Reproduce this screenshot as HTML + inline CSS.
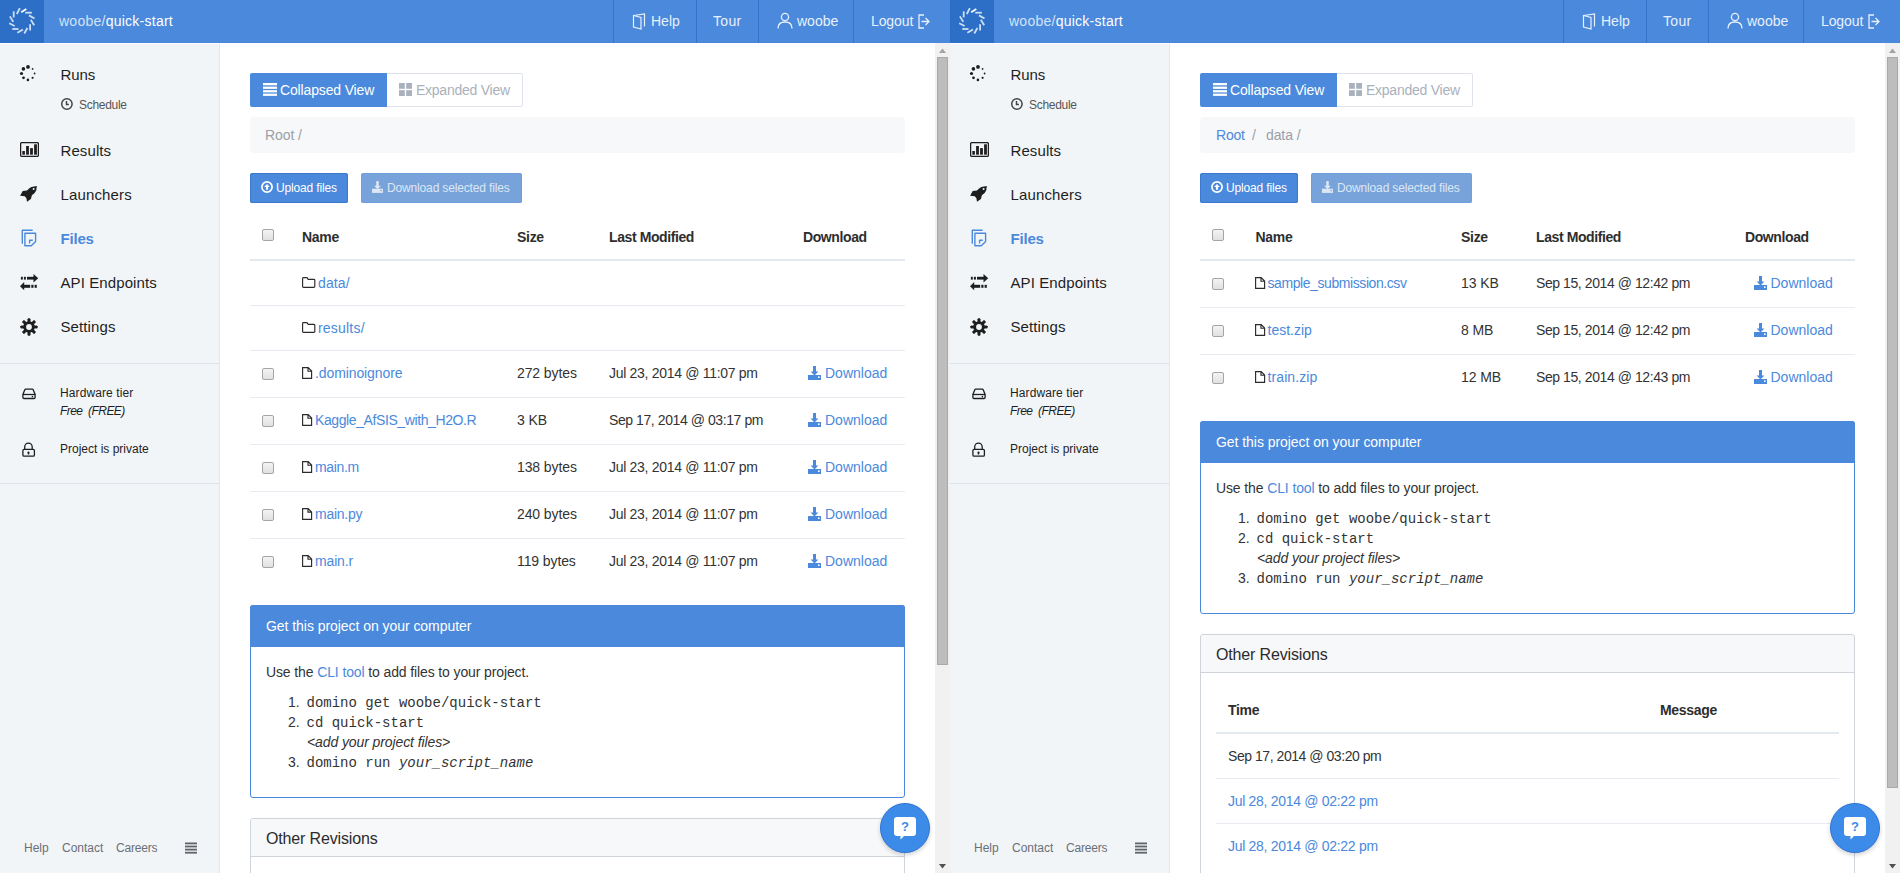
<!DOCTYPE html>
<html><head><meta charset="utf-8"><title>Files</title>
<style>
html,body{margin:0;padding:0;background:#fff;width:1900px;height:877px;overflow:hidden;}
body{font-family:"Liberation Sans", sans-serif;position:relative;}
.panel{position:absolute;top:0;width:950px;height:873px;overflow:hidden;background:#fff;}
.t{position:absolute;white-space:nowrap;}
.r{position:absolute;box-sizing:content-box;}
.cb{width:10px;height:10px;border:1px solid #a5a5a5;border-radius:2px;background:linear-gradient(#f3f3f3,#e1e1e1);}
</style></head><body>
<div class="panel" style="left:0px"><div class="r" style="left:0px;top:0px;width:950px;height:43px;background:#4a89dc;"></div><div class="r" style="left:0px;top:43px;width:950px;height:1px;background:#fdfdfd;"></div><div class="r" style="left:0px;top:0px;width:44px;height:43px;background:#2d6fc6;"></div><svg class="r" style="left:0px;top:0px" width="44" height="42" viewBox="0 0 44 42"><g stroke-width="1.8" stroke-linecap="butt"><line x1="19.8" y1="8.2" x2="16.8" y2="14" stroke="#cddff5"/><line x1="26.3" y1="8.9" x2="21.2" y2="12.3" stroke="#ffffff"/><line x1="25.3" y1="12.7" x2="31.8" y2="12.7" stroke="#cddff5"/><line x1="29" y1="15.4" x2="34.5" y2="18.5" stroke="#cddff5"/><line x1="30.8" y1="19.8" x2="34.2" y2="25.3" stroke="#cddff5"/><line x1="30.1" y1="24.3" x2="30.1" y2="30.4" stroke="#cddff5"/><line x1="27.4" y1="28" x2="24.3" y2="33.5" stroke="#cddff5"/><line x1="22.9" y1="29.4" x2="17.4" y2="32.8" stroke="#cddff5"/><line x1="18.5" y1="29" x2="12.3" y2="29" stroke="#cddff5"/><line x1="14.7" y1="26" x2="9.2" y2="23.3" stroke="#cddff5"/><line x1="13.3" y1="21.9" x2="9.9" y2="16.4" stroke="#cddff5"/><line x1="13.7" y1="11.3" x2="13.7" y2="17.4" stroke="#cddff5"/></g></svg><div class="t" style="left:59px;top:13.85px;font-size:14px;line-height:14px;color:#2b2b2b;letter-spacing:0.25px;"><span style="color:#d3e2f6">woobe/</span><span style="color:#fff">quick-start</span></div><div class="r" style="left:613px;top:0px;width:1px;height:43px;background:#3473c9;"></div><div class="r" style="left:696px;top:0px;width:1px;height:43px;background:#3473c9;"></div><div class="r" style="left:758px;top:0px;width:1px;height:43px;background:#3473c9;"></div><div class="r" style="left:853px;top:0px;width:1px;height:43px;background:#3473c9;"></div><svg class="r" style="left:632px;top:13px" width="14" height="17" viewBox="0 0 14 17"><g fill="none" stroke="#e8f0fb" stroke-width="1.2"><path d="M1.5 2.5 L12.5 1 L12.5 13.5"/><path d="M1.5 2.5 L9 4.5 L9 16 L1.5 14 Z"/></g></svg><div class="t" style="left:651px;top:14.15px;font-size:14px;line-height:14px;color:#e8f0fb;">Help</div><div class="t" style="left:713px;top:14.15px;font-size:14px;line-height:14px;color:#e8f0fb;letter-spacing:0.3px;">Tour</div><svg class="r" style="left:777px;top:12px" width="16" height="17" viewBox="0 0 16 17"><g fill="none" stroke="#e8f0fb" stroke-width="1.3"><circle cx="8" cy="5" r="3.6"/><path d="M1 16.5 C1 11.5 4 10 8 10 C12 10 15 11.5 15 16.5"/></g></svg><div class="t" style="left:797px;top:14.15px;font-size:14px;line-height:14px;color:#e8f0fb;">woobe</div><div class="t" style="left:871px;top:14.15px;font-size:14px;line-height:14px;color:#e8f0fb;letter-spacing:-0.1px;">Logout</div><svg class="r" style="left:918px;top:14px" width="12" height="15" viewBox="0 0 12 15"><g fill="none" stroke="#e8f0fb" stroke-width="1.3"><path d="M6 1 L1 1 L1 14 L6 14"/><path d="M3.5 7.5 L11 7.5 M7.5 4 L11 7.5 L7.5 11"/></g></svg><div class="r" style="left:0px;top:44px;width:219px;height:829px;background:#f2f5f8;"></div><div class="r" style="left:219px;top:44px;width:1px;height:829px;background:#e3e7ec;"></div><svg class="r" style="left:16px;top:61px" width="24" height="24" viewBox="0 0 24 24"><g fill="#1e1e1e"><circle cx="12.00" cy="5.90" r="1.9"/><circle cx="7.40" cy="7.90" r="1.8"/><circle cx="5.50" cy="12.50" r="1.6"/><circle cx="7.50" cy="16.80" r="1.4"/><circle cx="11.90" cy="18.90" r="1.3"/><circle cx="16.60" cy="16.80" r="1.1"/><circle cx="18.60" cy="12.50" r="0.9"/><circle cx="16.60" cy="7.90" r="0.9"/></g></svg><div class="t" style="left:60.5px;top:67.30px;font-size:15px;line-height:15px;color:#1e1e1e;letter-spacing:-0.1px;">Runs</div><svg class="r" style="left:60px;top:97px" width="14" height="14" viewBox="0 0 14 14"><g fill="none" stroke="#444" stroke-width="1.5"><circle cx="6.9" cy="7" r="5.2"/><path d="M6.5 4 V7.6 H8.9"/></g></svg><div class="t" style="left:79px;top:98.84px;font-size:12px;line-height:12px;color:#555;letter-spacing:-0.3px;">Schedule</div><svg class="r" style="left:20px;top:142px" width="19" height="15" viewBox="0 0 19 15"><rect x="0.6" y="0.6" width="17.8" height="13.8" rx="1.2" fill="none" stroke="#1e1e1e" stroke-width="1.3"/><g fill="#1e1e1e"><rect x="2.3" y="9" width="2.6" height="3.7"/><rect x="6.1" y="4" width="2.8" height="8.7"/><rect x="10.1" y="6.1" width="2.8" height="6.6"/><rect x="14.1" y="2.3" width="2.8" height="10.4"/></g></svg><div class="t" style="left:60.5px;top:143.30px;font-size:15px;line-height:15px;color:#1e1e1e;letter-spacing:0.1px;">Results</div><svg class="r" style="left:16px;top:182px" width="24" height="24" viewBox="0 0 24 24"><path fill="#1e1e1e" d="M4.1 13.7 L6.7 9 L11 8.5 Q13 6 15.3 4.9 L20.8 4.1 L20.3 8.2 Q19 11.5 15.9 13.2 L14.9 17 L11 19.7 L10.4 16.2 L8.8 14.2 Z"/><circle cx="17.6" cy="6.9" r="1" fill="#f2f5f8"/></svg><div class="t" style="left:60.5px;top:187.30px;font-size:15px;line-height:15px;color:#1e1e1e;letter-spacing:0.15px;">Launchers</div><svg class="r" style="left:16px;top:226px" width="24" height="24" viewBox="0 0 24 24"><g fill="none" stroke="#4a89dc" stroke-width="1.4" stroke-linejoin="round"><path d="M6.3 17.8 V4.3 H16.7"/><path d="M8.9 7.3 H19.6 V15.5 L15.3 19.7 H8.9 Z"/><path d="M13.6 17.6 V14.2 H16.8"/></g></svg><div class="t" style="left:60.5px;top:231.30px;font-size:15px;line-height:15px;color:#4a89dc;font-weight:700;letter-spacing:-0.2px;">Files</div><svg class="r" style="left:16px;top:270px" width="24" height="24" viewBox="0 0 24 24"><g fill="#1e1e1e"><rect x="11" y="6.8" width="7.5" height="2.8"/><path d="M17.5 4.1 L22.2 8.2 L17.5 12.6 Z"/><rect x="4.9" y="6.8" width="1.9" height="2.8"/><rect x="7.9" y="6.8" width="2" height="2.8"/><rect x="8" y="14.8" width="6.2" height="3"/><path d="M8.2 12 L4 16.3 L8.2 20.3 Z"/><rect x="15.3" y="14.8" width="2.2" height="3"/><rect x="18.6" y="14.8" width="2.2" height="3"/></g></svg><div class="t" style="left:60.5px;top:275.30px;font-size:15px;line-height:15px;color:#1e1e1e;letter-spacing:0.1px;">API Endpoints</div><svg class="r" style="left:20px;top:318px" width="18" height="18" viewBox="0 0 18 18"><g fill="#1e1e1e"><rect x="7.7" y="0.6" width="2.6" height="16.8" rx="0.6" transform="rotate(0 9 9)"/><rect x="7.7" y="0.6" width="2.6" height="16.8" rx="0.6" transform="rotate(45 9 9)"/><rect x="7.7" y="0.6" width="2.6" height="16.8" rx="0.6" transform="rotate(90 9 9)"/><rect x="7.7" y="0.6" width="2.6" height="16.8" rx="0.6" transform="rotate(135 9 9)"/><rect x="7.7" y="0.6" width="2.6" height="16.8" rx="0.6" transform="rotate(180 9 9)"/><rect x="7.7" y="0.6" width="2.6" height="16.8" rx="0.6" transform="rotate(225 9 9)"/><rect x="7.7" y="0.6" width="2.6" height="16.8" rx="0.6" transform="rotate(270 9 9)"/><rect x="7.7" y="0.6" width="2.6" height="16.8" rx="0.6" transform="rotate(315 9 9)"/><circle cx="9" cy="9" r="5.8"/></g><circle cx="9" cy="9" r="2.9" fill="#f2f5f8"/></svg><div class="t" style="left:60.5px;top:319.30px;font-size:15px;line-height:15px;color:#1e1e1e;letter-spacing:0.1px;">Settings</div><div class="r" style="left:0px;top:363px;width:219px;height:1px;background:#dde2e8;"></div><svg class="r" style="left:16px;top:382px" width="24" height="24" viewBox="0 0 24 24"><g fill="none" stroke="#1e1e1e" stroke-width="1.3"><path d="M9.8 7.2 H16.2 Q17 7.2 17.3 8 L19.1 12.5 V15.5 Q19.1 16.5 18.1 16.5 H7.9 Q6.9 16.5 6.9 15.5 V12.5 L8.7 8 Q9 7.2 9.8 7.2 Z"/><path d="M6.9 12.5 H19.1"/></g><circle cx="16.4" cy="14.6" r="0.8" fill="#1e1e1e"/></svg><div class="t" style="left:60px;top:386.84px;font-size:12px;line-height:12px;color:#1e1e1e;letter-spacing:0.1px;">Hardware tier</div><div class="t" style="left:60px;top:404.84px;font-size:12px;line-height:12px;color:#1e1e1e;font-style:italic;letter-spacing:-0.55px;">Free&nbsp;&nbsp;(FREE)</div><svg class="r" style="left:16px;top:436px" width="24" height="24" viewBox="0 0 24 24"><g fill="none" stroke="#1e1e1e" stroke-width="1.3"><path d="M8.7 13.4 V10.95 A3.75 3.75 0 0 1 16.2 10.95 V13.4"/><rect x="6.9" y="13.4" width="11.5" height="6.7" rx="1.2"/></g><path d="M12.5 15.4 a1.1 1.1 0 0 1 1.1 1.1 l-0.5 1.9 h-1.2 l-0.5 -1.9 a1.1 1.1 0 0 1 1.1 -1.1z" fill="#1e1e1e"/></svg><div class="t" style="left:60px;top:442.84px;font-size:12px;line-height:12px;color:#1e1e1e;">Project is private</div><div class="r" style="left:0px;top:483px;width:219px;height:1px;background:#dde2e8;"></div><div class="t" style="left:24px;top:841.84px;font-size:12px;line-height:12px;color:#6b6f76;">Help</div><div class="t" style="left:62px;top:841.84px;font-size:12px;line-height:12px;color:#6b6f76;">Contact</div><div class="t" style="left:116px;top:841.84px;font-size:12px;line-height:12px;color:#6b6f76;letter-spacing:-0.2px;">Careers</div><svg class="r" style="left:185px;top:842px" width="12" height="12" viewBox="0 0 12 12"><g fill="#5f636a"><rect x="0" y="0.5" width="12" height="1.8"/><rect x="0" y="3.6" width="12" height="1.8"/><rect x="0" y="6.7" width="12" height="1.8"/><rect x="0" y="9.8" width="12" height="1.8"/></g></svg><div class="r" style="left:250px;top:73px;width:137px;height:34px;background:#4a89dc;border-radius:2px 0 0 2px;"></div><div class="r" style="left:387px;top:73px;width:135px;height:32px;border:1px solid #dfe4ec;border-left:none;border-radius:0 2px 2px 0;"></div><svg class="r" style="left:263px;top:83px" width="14" height="13" viewBox="0 0 14 13"><g fill="#fff"><rect x="0" y="0" width="14" height="2.3"/><rect x="0" y="3.6" width="14" height="2.3"/><rect x="0" y="7.1" width="14" height="2.3"/><rect x="0" y="10.6" width="14" height="2.3"/></g></svg><div class="t" style="left:280px;top:83.15px;font-size:14px;line-height:14px;color:#fff;letter-spacing:-0.15px;">Collapsed View</div><svg class="r" style="left:399px;top:83px" width="13" height="13" viewBox="0 0 13 13"><g fill="#a9b1bc"><rect x="0" y="0" width="5.8" height="5.8"/><rect x="7.2" y="0" width="5.8" height="5.8"/><rect x="0" y="7.2" width="5.8" height="5.8"/><rect x="7.2" y="7.2" width="5.8" height="5.8"/></g></svg><div class="t" style="left:416px;top:83.15px;font-size:14px;line-height:14px;color:#a9b1bc;letter-spacing:-0.25px;">Expanded View</div><div class="r" style="left:250px;top:117px;width:655px;height:36px;background:#f7f8fa;border-radius:4px;"></div><div class="t" style="left:265px;top:128.15px;font-size:14px;line-height:14px;color:#9aa0a8;letter-spacing:-0.1px;">Root /</div><div class="r" style="left:250px;top:173px;width:98px;height:30px;background:#4a89dc;border-radius:2.5px;box-shadow:inset 0 0 0 1px #3b79cf;"></div><svg class="r" style="left:261px;top:181px" width="12" height="12" viewBox="0 0 12 12"><circle cx="6" cy="6" r="5.1" fill="none" stroke="#fff" stroke-width="1.7"/><path d="M6 3 L8.8 5.9 H7.1 V8.8 H4.9 V5.9 H3.2 Z" fill="#fff"/></svg><div class="t" style="left:276px;top:182.34px;font-size:12px;line-height:12px;color:#fff;letter-spacing:-0.15px;">Upload files</div><div class="r" style="left:361px;top:173px;width:161px;height:30px;background:#78a3da;border-radius:2.5px;box-shadow:inset 0 0 0 1px #70a0db;"></div><svg class="r" style="left:372px;top:181px" width="11" height="12" viewBox="0 0 13 14"><g fill="#dce7f5"><rect x="5" y="0" width="3" height="6"/><path d="M2.6 5.6 H10.4 L6.5 9.6 Z"/><rect x="0" y="9" width="13" height="5"/></g><rect x="10" y="10.4" width="1.6" height="1.6" fill="#78a3da"/></svg><div class="t" style="left:387px;top:182.34px;font-size:12px;line-height:12px;color:#dce7f5;letter-spacing:-0.15px;">Download selected files</div><div class="r cb" style="left:262px;top:229px"></div><div class="t" style="left:302px;top:230.15px;font-size:14px;line-height:14px;color:#2e2e2e;font-weight:700;letter-spacing:-0.3px;">Name</div><div class="t" style="left:517px;top:230.15px;font-size:14px;line-height:14px;color:#2e2e2e;font-weight:700;letter-spacing:-0.3px;">Size</div><div class="t" style="left:609px;top:230.15px;font-size:14px;line-height:14px;color:#2e2e2e;font-weight:700;letter-spacing:-0.4px;">Last Modified</div><div class="t" style="left:803px;top:230.15px;font-size:14px;line-height:14px;color:#2e2e2e;font-weight:700;letter-spacing:-0.4px;">Download</div><div class="r" style="left:250px;top:259px;width:655px;height:2px;background:#e4e9f0;"></div><svg class="r" style="left:302px;top:277px" width="14" height="12" viewBox="0 0 14 12"><path d="M0.6 1.5 Q0.6 0.6 1.5 0.6 H5 L6.2 2.3 H11.9 Q12.8 2.3 12.8 3.2 V9.4 Q12.8 10.3 11.9 10.3 H1.5 Q0.6 10.3 0.6 9.4 Z" fill="none" stroke="#2b2b2b" stroke-width="1.15"/></svg><div class="t" style="left:318px;top:276.15px;font-size:14px;line-height:14px;color:#4a89dc;letter-spacing:0.1px;">data/</div><div class="r" style="left:250px;top:305px;width:655px;height:1px;background:#e8ecf2;"></div><svg class="r" style="left:302px;top:322px" width="14" height="12" viewBox="0 0 14 12"><path d="M0.6 1.5 Q0.6 0.6 1.5 0.6 H5 L6.2 2.3 H11.9 Q12.8 2.3 12.8 3.2 V9.4 Q12.8 10.3 11.9 10.3 H1.5 Q0.6 10.3 0.6 9.4 Z" fill="none" stroke="#2b2b2b" stroke-width="1.15"/></svg><div class="t" style="left:318px;top:321.15px;font-size:14px;line-height:14px;color:#4a89dc;letter-spacing:0.2px;">results/</div><div class="r" style="left:250px;top:350px;width:655px;height:1px;background:#e8ecf2;"></div><div class="r cb" style="left:262px;top:368px"></div><svg class="r" style="left:302px;top:367px" width="12" height="14" viewBox="0 0 12 14"><path d="M0.6 0.6 H6.2 L9.6 4 V11.4 H0.6 Z M6 0.6 V4.2 H9.6" fill="none" stroke="#2b2b2b" stroke-width="1.15"/></svg><div class="t" style="left:315px;top:366.15px;font-size:14px;line-height:14px;color:#4a89dc;letter-spacing:-0.1px;">.dominoignore</div><div class="t" style="left:517px;top:366.15px;font-size:14px;line-height:14px;color:#333333;letter-spacing:-0.1px;">272 bytes</div><div class="t" style="left:609px;top:366.15px;font-size:14px;line-height:14px;color:#333333;letter-spacing:-0.3px;">Jul 23, 2014 @ 11:07 pm</div><svg class="r" style="left:808px;top:366px" width="13" height="14" viewBox="0 0 13 14"><g fill="#4a89dc"><rect x="5" y="0" width="3" height="6"/><path d="M2.6 5.6 H10.4 L6.5 9.6 Z"/><rect x="0" y="9" width="13" height="5"/></g><rect x="10" y="10.4" width="1.6" height="1.6" fill="#fff"/></svg><div class="t" style="left:825px;top:366.15px;font-size:14px;line-height:14px;color:#4a89dc;">Download</div><div class="r" style="left:250px;top:397px;width:655px;height:1px;background:#e8ecf2;"></div><div class="r cb" style="left:262px;top:415px"></div><svg class="r" style="left:302px;top:414px" width="12" height="14" viewBox="0 0 12 14"><path d="M0.6 0.6 H6.2 L9.6 4 V11.4 H0.6 Z M6 0.6 V4.2 H9.6" fill="none" stroke="#2b2b2b" stroke-width="1.15"/></svg><div class="t" style="left:315px;top:413.15px;font-size:14px;line-height:14px;color:#4a89dc;letter-spacing:-0.4px;">Kaggle_AfSIS_with_H2O.R</div><div class="t" style="left:517px;top:413.15px;font-size:14px;line-height:14px;color:#333333;letter-spacing:-0.1px;">3 KB</div><div class="t" style="left:609px;top:413.15px;font-size:14px;line-height:14px;color:#333333;letter-spacing:-0.42px;">Sep 17, 2014 @ 03:17 pm</div><svg class="r" style="left:808px;top:413px" width="13" height="14" viewBox="0 0 13 14"><g fill="#4a89dc"><rect x="5" y="0" width="3" height="6"/><path d="M2.6 5.6 H10.4 L6.5 9.6 Z"/><rect x="0" y="9" width="13" height="5"/></g><rect x="10" y="10.4" width="1.6" height="1.6" fill="#fff"/></svg><div class="t" style="left:825px;top:413.15px;font-size:14px;line-height:14px;color:#4a89dc;">Download</div><div class="r" style="left:250px;top:444px;width:655px;height:1px;background:#e8ecf2;"></div><div class="r cb" style="left:262px;top:462px"></div><svg class="r" style="left:302px;top:461px" width="12" height="14" viewBox="0 0 12 14"><path d="M0.6 0.6 H6.2 L9.6 4 V11.4 H0.6 Z M6 0.6 V4.2 H9.6" fill="none" stroke="#2b2b2b" stroke-width="1.15"/></svg><div class="t" style="left:315px;top:460.15px;font-size:14px;line-height:14px;color:#4a89dc;letter-spacing:-0.35px;">main.m</div><div class="t" style="left:517px;top:460.15px;font-size:14px;line-height:14px;color:#333333;letter-spacing:-0.1px;">138 bytes</div><div class="t" style="left:609px;top:460.15px;font-size:14px;line-height:14px;color:#333333;letter-spacing:-0.3px;">Jul 23, 2014 @ 11:07 pm</div><svg class="r" style="left:808px;top:460px" width="13" height="14" viewBox="0 0 13 14"><g fill="#4a89dc"><rect x="5" y="0" width="3" height="6"/><path d="M2.6 5.6 H10.4 L6.5 9.6 Z"/><rect x="0" y="9" width="13" height="5"/></g><rect x="10" y="10.4" width="1.6" height="1.6" fill="#fff"/></svg><div class="t" style="left:825px;top:460.15px;font-size:14px;line-height:14px;color:#4a89dc;">Download</div><div class="r" style="left:250px;top:491px;width:655px;height:1px;background:#e8ecf2;"></div><div class="r cb" style="left:262px;top:509px"></div><svg class="r" style="left:302px;top:508px" width="12" height="14" viewBox="0 0 12 14"><path d="M0.6 0.6 H6.2 L9.6 4 V11.4 H0.6 Z M6 0.6 V4.2 H9.6" fill="none" stroke="#2b2b2b" stroke-width="1.15"/></svg><div class="t" style="left:315px;top:507.15px;font-size:14px;line-height:14px;color:#4a89dc;letter-spacing:-0.26px;">main.py</div><div class="t" style="left:517px;top:507.15px;font-size:14px;line-height:14px;color:#333333;letter-spacing:-0.1px;">240 bytes</div><div class="t" style="left:609px;top:507.15px;font-size:14px;line-height:14px;color:#333333;letter-spacing:-0.3px;">Jul 23, 2014 @ 11:07 pm</div><svg class="r" style="left:808px;top:507px" width="13" height="14" viewBox="0 0 13 14"><g fill="#4a89dc"><rect x="5" y="0" width="3" height="6"/><path d="M2.6 5.6 H10.4 L6.5 9.6 Z"/><rect x="0" y="9" width="13" height="5"/></g><rect x="10" y="10.4" width="1.6" height="1.6" fill="#fff"/></svg><div class="t" style="left:825px;top:507.15px;font-size:14px;line-height:14px;color:#4a89dc;">Download</div><div class="r" style="left:250px;top:538px;width:655px;height:1px;background:#e8ecf2;"></div><div class="r cb" style="left:262px;top:556px"></div><svg class="r" style="left:302px;top:555px" width="12" height="14" viewBox="0 0 12 14"><path d="M0.6 0.6 H6.2 L9.6 4 V11.4 H0.6 Z M6 0.6 V4.2 H9.6" fill="none" stroke="#2b2b2b" stroke-width="1.15"/></svg><div class="t" style="left:315px;top:554.15px;font-size:14px;line-height:14px;color:#4a89dc;letter-spacing:-0.15px;">main.r</div><div class="t" style="left:517px;top:554.15px;font-size:14px;line-height:14px;color:#333333;letter-spacing:-0.1px;">119 bytes</div><div class="t" style="left:609px;top:554.15px;font-size:14px;line-height:14px;color:#333333;letter-spacing:-0.3px;">Jul 23, 2014 @ 11:07 pm</div><svg class="r" style="left:808px;top:554px" width="13" height="14" viewBox="0 0 13 14"><g fill="#4a89dc"><rect x="5" y="0" width="3" height="6"/><path d="M2.6 5.6 H10.4 L6.5 9.6 Z"/><rect x="0" y="9" width="13" height="5"/></g><rect x="10" y="10.4" width="1.6" height="1.6" fill="#fff"/></svg><div class="t" style="left:825px;top:554.15px;font-size:14px;line-height:14px;color:#4a89dc;">Download</div><div class="r" style="left:250px;top:605px;width:653px;height:191px;border:1px solid #4a89dc;border-radius:3px;"></div><div class="r" style="left:250px;top:605px;width:655px;height:42px;background:#4a89dc;border-radius:3px 3px 0 0;"></div><div class="t" style="left:266px;top:619.15px;font-size:14px;line-height:14px;color:#fff;letter-spacing:-0.05px;">Get this project on your computer</div><div class="t" style="left:266px;top:665.15px;font-size:14px;line-height:14px;color:#333333;letter-spacing:-0.12px;">Use the <span style="color:#4a89dc">CLI tool</span> to add files to your project.</div><div class="t" style="left:288px;top:695.15px;font-size:14px;line-height:14px;color:#333333;">1.</div><div class="t" style="left:306.5px;top:696.27px;font-size:14px;line-height:14px;color:#333333;font-family:'Liberation Mono', monospace;">domino get woobe/quick-start</div><div class="t" style="left:288px;top:714.65px;font-size:14px;line-height:14px;color:#333333;">2.</div><div class="t" style="left:306.5px;top:715.77px;font-size:14px;line-height:14px;color:#333333;font-family:'Liberation Mono', monospace;">cd quick-start</div><div class="t" style="left:307px;top:735.15px;font-size:14px;line-height:14px;color:#333333;font-style:italic;letter-spacing:-0.1px;">&lt;add your project files&gt;</div><div class="t" style="left:288px;top:754.65px;font-size:14px;line-height:14px;color:#333333;">3.</div><div class="t" style="left:306.5px;top:755.77px;font-size:14px;line-height:14px;color:#333333;font-family:'Liberation Mono', monospace;">domino run <i>your_script_name</i></div><div class="r" style="left:250px;top:818px;width:653px;height:65px;border:1px solid #cfd4da;border-radius:3px;"></div><div class="r" style="left:251px;top:819px;width:653px;height:37px;background:#f7f8fa;border-radius:3px 3px 0 0;"></div><div class="r" style="left:251px;top:856px;width:653px;height:1px;background:#cfd4da;"></div><div class="t" style="left:266px;top:830.96px;font-size:16px;line-height:16px;color:#2b2b2b;letter-spacing:-0.15px;">Other Revisions</div><div class="t" style="left:278px;top:887.15px;font-size:14px;line-height:14px;color:#2e2e2e;font-weight:700;letter-spacing:-0.3px;">Time</div><div class="t" style="left:710px;top:887.15px;font-size:14px;line-height:14px;color:#2e2e2e;font-weight:700;letter-spacing:-0.3px;">Message</div><div class="r" style="left:266px;top:916px;width:623px;height:2px;background:#e4e9f0;"></div><div class="t" style="left:278px;top:933.15px;font-size:14px;line-height:14px;color:#333333;letter-spacing:-0.45px;">Sep 17, 2014 @ 03:20 pm</div><div class="r" style="left:266px;top:962px;width:623px;height:1px;background:#e8ecf2;"></div><div class="t" style="left:278px;top:978.15px;font-size:14px;line-height:14px;color:#4a89dc;letter-spacing:-0.3px;">Jul 28, 2014 @ 02:22 pm</div><div class="r" style="left:266px;top:1007px;width:623px;height:1px;background:#e8ecf2;"></div><div class="t" style="left:278px;top:1023.15px;font-size:14px;line-height:14px;color:#4a89dc;letter-spacing:-0.3px;">Jul 28, 2014 @ 02:22 pm</div><div class="r" style="left:935px;top:43px;width:15px;height:830px;background:#f1f1f1;"></div><svg class="r" style="left:939px;top:48px" width="7" height="5" viewBox="0 0 7 5"><path d="M0 5 L3.5 0.5 L7 5Z" fill="#a3a3a3"/></svg><div class="r" style="left:937px;top:57px;width:11px;height:608px;background:#bdbdbd;box-shadow:inset 0 0 0 1px #a9a9a9;"></div><svg class="r" style="left:939px;top:864px" width="7" height="5" viewBox="0 0 7 5"><path d="M0 0 L3.5 4.5 L7 0Z" fill="#505050"/></svg><div class="r" style="left:880px;top:803px;width:48px;height:48px;border-radius:50%;background:#3d8be8;border:1px solid #2e74d4;box-shadow:0 2px 4px rgba(0,0,0,0.18);"></div><svg class="r" style="left:894px;top:817px" width="22" height="23" viewBox="0 0 22 23"><path d="M3 0 H19 A3 3 0 0 1 22 3 V16 A3 3 0 0 1 19 19 H10 L6.5 22.5 L6.5 19 H3 A3 3 0 0 1 0 16 V3 A3 3 0 0 1 3 0Z" fill="#fff"/><text x="11" y="13.8" text-anchor="middle" font-family="Liberation Sans" font-weight="700" font-size="13" fill="#3d8be8">?</text></svg></div>
<div class="panel" style="left:950px"><div class="r" style="left:0px;top:0px;width:950px;height:43px;background:#4a89dc;"></div><div class="r" style="left:0px;top:43px;width:950px;height:1px;background:#fdfdfd;"></div><div class="r" style="left:0px;top:0px;width:44px;height:43px;background:#2d6fc6;"></div><svg class="r" style="left:0px;top:0px" width="44" height="42" viewBox="0 0 44 42"><g stroke-width="1.8" stroke-linecap="butt"><line x1="19.8" y1="8.2" x2="16.8" y2="14" stroke="#cddff5"/><line x1="26.3" y1="8.9" x2="21.2" y2="12.3" stroke="#ffffff"/><line x1="25.3" y1="12.7" x2="31.8" y2="12.7" stroke="#cddff5"/><line x1="29" y1="15.4" x2="34.5" y2="18.5" stroke="#cddff5"/><line x1="30.8" y1="19.8" x2="34.2" y2="25.3" stroke="#cddff5"/><line x1="30.1" y1="24.3" x2="30.1" y2="30.4" stroke="#cddff5"/><line x1="27.4" y1="28" x2="24.3" y2="33.5" stroke="#cddff5"/><line x1="22.9" y1="29.4" x2="17.4" y2="32.8" stroke="#cddff5"/><line x1="18.5" y1="29" x2="12.3" y2="29" stroke="#cddff5"/><line x1="14.7" y1="26" x2="9.2" y2="23.3" stroke="#cddff5"/><line x1="13.3" y1="21.9" x2="9.9" y2="16.4" stroke="#cddff5"/><line x1="13.7" y1="11.3" x2="13.7" y2="17.4" stroke="#cddff5"/></g></svg><div class="t" style="left:59px;top:13.85px;font-size:14px;line-height:14px;color:#2b2b2b;letter-spacing:0.25px;"><span style="color:#d3e2f6">woobe/</span><span style="color:#fff">quick-start</span></div><div class="r" style="left:613px;top:0px;width:1px;height:43px;background:#3473c9;"></div><div class="r" style="left:696px;top:0px;width:1px;height:43px;background:#3473c9;"></div><div class="r" style="left:758px;top:0px;width:1px;height:43px;background:#3473c9;"></div><div class="r" style="left:853px;top:0px;width:1px;height:43px;background:#3473c9;"></div><svg class="r" style="left:632px;top:13px" width="14" height="17" viewBox="0 0 14 17"><g fill="none" stroke="#e8f0fb" stroke-width="1.2"><path d="M1.5 2.5 L12.5 1 L12.5 13.5"/><path d="M1.5 2.5 L9 4.5 L9 16 L1.5 14 Z"/></g></svg><div class="t" style="left:651px;top:14.15px;font-size:14px;line-height:14px;color:#e8f0fb;">Help</div><div class="t" style="left:713px;top:14.15px;font-size:14px;line-height:14px;color:#e8f0fb;letter-spacing:0.3px;">Tour</div><svg class="r" style="left:777px;top:12px" width="16" height="17" viewBox="0 0 16 17"><g fill="none" stroke="#e8f0fb" stroke-width="1.3"><circle cx="8" cy="5" r="3.6"/><path d="M1 16.5 C1 11.5 4 10 8 10 C12 10 15 11.5 15 16.5"/></g></svg><div class="t" style="left:797px;top:14.15px;font-size:14px;line-height:14px;color:#e8f0fb;">woobe</div><div class="t" style="left:871px;top:14.15px;font-size:14px;line-height:14px;color:#e8f0fb;letter-spacing:-0.1px;">Logout</div><svg class="r" style="left:918px;top:14px" width="12" height="15" viewBox="0 0 12 15"><g fill="none" stroke="#e8f0fb" stroke-width="1.3"><path d="M6 1 L1 1 L1 14 L6 14"/><path d="M3.5 7.5 L11 7.5 M7.5 4 L11 7.5 L7.5 11"/></g></svg><div class="r" style="left:0px;top:44px;width:219px;height:829px;background:#f2f5f8;"></div><div class="r" style="left:219px;top:44px;width:1px;height:829px;background:#e3e7ec;"></div><svg class="r" style="left:16px;top:61px" width="24" height="24" viewBox="0 0 24 24"><g fill="#1e1e1e"><circle cx="12.00" cy="5.90" r="1.9"/><circle cx="7.40" cy="7.90" r="1.8"/><circle cx="5.50" cy="12.50" r="1.6"/><circle cx="7.50" cy="16.80" r="1.4"/><circle cx="11.90" cy="18.90" r="1.3"/><circle cx="16.60" cy="16.80" r="1.1"/><circle cx="18.60" cy="12.50" r="0.9"/><circle cx="16.60" cy="7.90" r="0.9"/></g></svg><div class="t" style="left:60.5px;top:67.30px;font-size:15px;line-height:15px;color:#1e1e1e;letter-spacing:-0.1px;">Runs</div><svg class="r" style="left:60px;top:97px" width="14" height="14" viewBox="0 0 14 14"><g fill="none" stroke="#444" stroke-width="1.5"><circle cx="6.9" cy="7" r="5.2"/><path d="M6.5 4 V7.6 H8.9"/></g></svg><div class="t" style="left:79px;top:98.84px;font-size:12px;line-height:12px;color:#555;letter-spacing:-0.3px;">Schedule</div><svg class="r" style="left:20px;top:142px" width="19" height="15" viewBox="0 0 19 15"><rect x="0.6" y="0.6" width="17.8" height="13.8" rx="1.2" fill="none" stroke="#1e1e1e" stroke-width="1.3"/><g fill="#1e1e1e"><rect x="2.3" y="9" width="2.6" height="3.7"/><rect x="6.1" y="4" width="2.8" height="8.7"/><rect x="10.1" y="6.1" width="2.8" height="6.6"/><rect x="14.1" y="2.3" width="2.8" height="10.4"/></g></svg><div class="t" style="left:60.5px;top:143.30px;font-size:15px;line-height:15px;color:#1e1e1e;letter-spacing:0.1px;">Results</div><svg class="r" style="left:16px;top:182px" width="24" height="24" viewBox="0 0 24 24"><path fill="#1e1e1e" d="M4.1 13.7 L6.7 9 L11 8.5 Q13 6 15.3 4.9 L20.8 4.1 L20.3 8.2 Q19 11.5 15.9 13.2 L14.9 17 L11 19.7 L10.4 16.2 L8.8 14.2 Z"/><circle cx="17.6" cy="6.9" r="1" fill="#f2f5f8"/></svg><div class="t" style="left:60.5px;top:187.30px;font-size:15px;line-height:15px;color:#1e1e1e;letter-spacing:0.15px;">Launchers</div><svg class="r" style="left:16px;top:226px" width="24" height="24" viewBox="0 0 24 24"><g fill="none" stroke="#4a89dc" stroke-width="1.4" stroke-linejoin="round"><path d="M6.3 17.8 V4.3 H16.7"/><path d="M8.9 7.3 H19.6 V15.5 L15.3 19.7 H8.9 Z"/><path d="M13.6 17.6 V14.2 H16.8"/></g></svg><div class="t" style="left:60.5px;top:231.30px;font-size:15px;line-height:15px;color:#4a89dc;font-weight:700;letter-spacing:-0.2px;">Files</div><svg class="r" style="left:16px;top:270px" width="24" height="24" viewBox="0 0 24 24"><g fill="#1e1e1e"><rect x="11" y="6.8" width="7.5" height="2.8"/><path d="M17.5 4.1 L22.2 8.2 L17.5 12.6 Z"/><rect x="4.9" y="6.8" width="1.9" height="2.8"/><rect x="7.9" y="6.8" width="2" height="2.8"/><rect x="8" y="14.8" width="6.2" height="3"/><path d="M8.2 12 L4 16.3 L8.2 20.3 Z"/><rect x="15.3" y="14.8" width="2.2" height="3"/><rect x="18.6" y="14.8" width="2.2" height="3"/></g></svg><div class="t" style="left:60.5px;top:275.30px;font-size:15px;line-height:15px;color:#1e1e1e;letter-spacing:0.1px;">API Endpoints</div><svg class="r" style="left:20px;top:318px" width="18" height="18" viewBox="0 0 18 18"><g fill="#1e1e1e"><rect x="7.7" y="0.6" width="2.6" height="16.8" rx="0.6" transform="rotate(0 9 9)"/><rect x="7.7" y="0.6" width="2.6" height="16.8" rx="0.6" transform="rotate(45 9 9)"/><rect x="7.7" y="0.6" width="2.6" height="16.8" rx="0.6" transform="rotate(90 9 9)"/><rect x="7.7" y="0.6" width="2.6" height="16.8" rx="0.6" transform="rotate(135 9 9)"/><rect x="7.7" y="0.6" width="2.6" height="16.8" rx="0.6" transform="rotate(180 9 9)"/><rect x="7.7" y="0.6" width="2.6" height="16.8" rx="0.6" transform="rotate(225 9 9)"/><rect x="7.7" y="0.6" width="2.6" height="16.8" rx="0.6" transform="rotate(270 9 9)"/><rect x="7.7" y="0.6" width="2.6" height="16.8" rx="0.6" transform="rotate(315 9 9)"/><circle cx="9" cy="9" r="5.8"/></g><circle cx="9" cy="9" r="2.9" fill="#f2f5f8"/></svg><div class="t" style="left:60.5px;top:319.30px;font-size:15px;line-height:15px;color:#1e1e1e;letter-spacing:0.1px;">Settings</div><div class="r" style="left:0px;top:363px;width:219px;height:1px;background:#dde2e8;"></div><svg class="r" style="left:16px;top:382px" width="24" height="24" viewBox="0 0 24 24"><g fill="none" stroke="#1e1e1e" stroke-width="1.3"><path d="M9.8 7.2 H16.2 Q17 7.2 17.3 8 L19.1 12.5 V15.5 Q19.1 16.5 18.1 16.5 H7.9 Q6.9 16.5 6.9 15.5 V12.5 L8.7 8 Q9 7.2 9.8 7.2 Z"/><path d="M6.9 12.5 H19.1"/></g><circle cx="16.4" cy="14.6" r="0.8" fill="#1e1e1e"/></svg><div class="t" style="left:60px;top:386.84px;font-size:12px;line-height:12px;color:#1e1e1e;letter-spacing:0.1px;">Hardware tier</div><div class="t" style="left:60px;top:404.84px;font-size:12px;line-height:12px;color:#1e1e1e;font-style:italic;letter-spacing:-0.55px;">Free&nbsp;&nbsp;(FREE)</div><svg class="r" style="left:16px;top:436px" width="24" height="24" viewBox="0 0 24 24"><g fill="none" stroke="#1e1e1e" stroke-width="1.3"><path d="M8.7 13.4 V10.95 A3.75 3.75 0 0 1 16.2 10.95 V13.4"/><rect x="6.9" y="13.4" width="11.5" height="6.7" rx="1.2"/></g><path d="M12.5 15.4 a1.1 1.1 0 0 1 1.1 1.1 l-0.5 1.9 h-1.2 l-0.5 -1.9 a1.1 1.1 0 0 1 1.1 -1.1z" fill="#1e1e1e"/></svg><div class="t" style="left:60px;top:442.84px;font-size:12px;line-height:12px;color:#1e1e1e;">Project is private</div><div class="r" style="left:0px;top:483px;width:219px;height:1px;background:#dde2e8;"></div><div class="t" style="left:24px;top:841.84px;font-size:12px;line-height:12px;color:#6b6f76;">Help</div><div class="t" style="left:62px;top:841.84px;font-size:12px;line-height:12px;color:#6b6f76;">Contact</div><div class="t" style="left:116px;top:841.84px;font-size:12px;line-height:12px;color:#6b6f76;letter-spacing:-0.2px;">Careers</div><svg class="r" style="left:185px;top:842px" width="12" height="12" viewBox="0 0 12 12"><g fill="#5f636a"><rect x="0" y="0.5" width="12" height="1.8"/><rect x="0" y="3.6" width="12" height="1.8"/><rect x="0" y="6.7" width="12" height="1.8"/><rect x="0" y="9.8" width="12" height="1.8"/></g></svg><div class="r" style="left:250px;top:73px;width:137px;height:34px;background:#4a89dc;border-radius:2px 0 0 2px;"></div><div class="r" style="left:387px;top:73px;width:135px;height:32px;border:1px solid #dfe4ec;border-left:none;border-radius:0 2px 2px 0;"></div><svg class="r" style="left:263px;top:83px" width="14" height="13" viewBox="0 0 14 13"><g fill="#fff"><rect x="0" y="0" width="14" height="2.3"/><rect x="0" y="3.6" width="14" height="2.3"/><rect x="0" y="7.1" width="14" height="2.3"/><rect x="0" y="10.6" width="14" height="2.3"/></g></svg><div class="t" style="left:280px;top:83.15px;font-size:14px;line-height:14px;color:#fff;letter-spacing:-0.15px;">Collapsed View</div><svg class="r" style="left:399px;top:83px" width="13" height="13" viewBox="0 0 13 13"><g fill="#a9b1bc"><rect x="0" y="0" width="5.8" height="5.8"/><rect x="7.2" y="0" width="5.8" height="5.8"/><rect x="0" y="7.2" width="5.8" height="5.8"/><rect x="7.2" y="7.2" width="5.8" height="5.8"/></g></svg><div class="t" style="left:416px;top:83.15px;font-size:14px;line-height:14px;color:#a9b1bc;letter-spacing:-0.25px;">Expanded View</div><div class="r" style="left:250px;top:117px;width:655px;height:36px;background:#f7f8fa;border-radius:4px;"></div><div class="t" style="left:266px;top:128.15px;font-size:14px;line-height:14px;color:#4a89dc;letter-spacing:-0.2px;">Root</div><div class="t" style="left:302px;top:128.15px;font-size:14px;line-height:14px;color:#9aa0a8;">/</div><div class="t" style="left:316px;top:128.15px;font-size:14px;line-height:14px;color:#9aa0a8;letter-spacing:-0.1px;">data /</div><div class="r" style="left:250px;top:173px;width:98px;height:30px;background:#4a89dc;border-radius:2.5px;box-shadow:inset 0 0 0 1px #3b79cf;"></div><svg class="r" style="left:261px;top:181px" width="12" height="12" viewBox="0 0 12 12"><circle cx="6" cy="6" r="5.1" fill="none" stroke="#fff" stroke-width="1.7"/><path d="M6 3 L8.8 5.9 H7.1 V8.8 H4.9 V5.9 H3.2 Z" fill="#fff"/></svg><div class="t" style="left:276px;top:182.34px;font-size:12px;line-height:12px;color:#fff;letter-spacing:-0.15px;">Upload files</div><div class="r" style="left:361px;top:173px;width:161px;height:30px;background:#78a3da;border-radius:2.5px;box-shadow:inset 0 0 0 1px #70a0db;"></div><svg class="r" style="left:372px;top:181px" width="11" height="12" viewBox="0 0 13 14"><g fill="#dce7f5"><rect x="5" y="0" width="3" height="6"/><path d="M2.6 5.6 H10.4 L6.5 9.6 Z"/><rect x="0" y="9" width="13" height="5"/></g><rect x="10" y="10.4" width="1.6" height="1.6" fill="#78a3da"/></svg><div class="t" style="left:387px;top:182.34px;font-size:12px;line-height:12px;color:#dce7f5;letter-spacing:-0.15px;">Download selected files</div><div class="r cb" style="left:262px;top:229px"></div><div class="t" style="left:305.5px;top:230.15px;font-size:14px;line-height:14px;color:#2e2e2e;font-weight:700;letter-spacing:-0.3px;">Name</div><div class="t" style="left:511px;top:230.15px;font-size:14px;line-height:14px;color:#2e2e2e;font-weight:700;letter-spacing:-0.3px;">Size</div><div class="t" style="left:586px;top:230.15px;font-size:14px;line-height:14px;color:#2e2e2e;font-weight:700;letter-spacing:-0.4px;">Last Modified</div><div class="t" style="left:795px;top:230.15px;font-size:14px;line-height:14px;color:#2e2e2e;font-weight:700;letter-spacing:-0.4px;">Download</div><div class="r" style="left:250px;top:259px;width:655px;height:2px;background:#e4e9f0;"></div><div class="r cb" style="left:262px;top:278px"></div><svg class="r" style="left:304.5px;top:277px" width="12" height="14" viewBox="0 0 12 14"><path d="M0.6 0.6 H6.2 L9.6 4 V11.4 H0.6 Z M6 0.6 V4.2 H9.6" fill="none" stroke="#2b2b2b" stroke-width="1.15"/></svg><div class="t" style="left:317.5px;top:276.15px;font-size:14px;line-height:14px;color:#4a89dc;letter-spacing:-0.42px;">sample_submission.csv</div><div class="t" style="left:511px;top:276.15px;font-size:14px;line-height:14px;color:#333333;letter-spacing:-0.1px;">13 KB</div><div class="t" style="left:586px;top:276.15px;font-size:14px;line-height:14px;color:#333333;letter-spacing:-0.42px;">Sep 15, 2014 @ 12:42 pm</div><svg class="r" style="left:803.5px;top:276px" width="13" height="14" viewBox="0 0 13 14"><g fill="#4a89dc"><rect x="5" y="0" width="3" height="6"/><path d="M2.6 5.6 H10.4 L6.5 9.6 Z"/><rect x="0" y="9" width="13" height="5"/></g><rect x="10" y="10.4" width="1.6" height="1.6" fill="#fff"/></svg><div class="t" style="left:820.5px;top:276.15px;font-size:14px;line-height:14px;color:#4a89dc;">Download</div><div class="r" style="left:250px;top:307px;width:655px;height:1px;background:#e8ecf2;"></div><div class="r cb" style="left:262px;top:325px"></div><svg class="r" style="left:304.5px;top:324px" width="12" height="14" viewBox="0 0 12 14"><path d="M0.6 0.6 H6.2 L9.6 4 V11.4 H0.6 Z M6 0.6 V4.2 H9.6" fill="none" stroke="#2b2b2b" stroke-width="1.15"/></svg><div class="t" style="left:317.5px;top:323.15px;font-size:14px;line-height:14px;color:#4a89dc;letter-spacing:0px;">test.zip</div><div class="t" style="left:511px;top:323.15px;font-size:14px;line-height:14px;color:#333333;letter-spacing:-0.1px;">8 MB</div><div class="t" style="left:586px;top:323.15px;font-size:14px;line-height:14px;color:#333333;letter-spacing:-0.42px;">Sep 15, 2014 @ 12:42 pm</div><svg class="r" style="left:803.5px;top:323px" width="13" height="14" viewBox="0 0 13 14"><g fill="#4a89dc"><rect x="5" y="0" width="3" height="6"/><path d="M2.6 5.6 H10.4 L6.5 9.6 Z"/><rect x="0" y="9" width="13" height="5"/></g><rect x="10" y="10.4" width="1.6" height="1.6" fill="#fff"/></svg><div class="t" style="left:820.5px;top:323.15px;font-size:14px;line-height:14px;color:#4a89dc;">Download</div><div class="r" style="left:250px;top:354px;width:655px;height:1px;background:#e8ecf2;"></div><div class="r cb" style="left:262px;top:372px"></div><svg class="r" style="left:304.5px;top:371px" width="12" height="14" viewBox="0 0 12 14"><path d="M0.6 0.6 H6.2 L9.6 4 V11.4 H0.6 Z M6 0.6 V4.2 H9.6" fill="none" stroke="#2b2b2b" stroke-width="1.15"/></svg><div class="t" style="left:317.5px;top:370.15px;font-size:14px;line-height:14px;color:#4a89dc;letter-spacing:0.1px;">train.zip</div><div class="t" style="left:511px;top:370.15px;font-size:14px;line-height:14px;color:#333333;letter-spacing:-0.1px;">12 MB</div><div class="t" style="left:586px;top:370.15px;font-size:14px;line-height:14px;color:#333333;letter-spacing:-0.42px;">Sep 15, 2014 @ 12:43 pm</div><svg class="r" style="left:803.5px;top:370px" width="13" height="14" viewBox="0 0 13 14"><g fill="#4a89dc"><rect x="5" y="0" width="3" height="6"/><path d="M2.6 5.6 H10.4 L6.5 9.6 Z"/><rect x="0" y="9" width="13" height="5"/></g><rect x="10" y="10.4" width="1.6" height="1.6" fill="#fff"/></svg><div class="t" style="left:820.5px;top:370.15px;font-size:14px;line-height:14px;color:#4a89dc;">Download</div><div class="r" style="left:250px;top:421px;width:653px;height:191px;border:1px solid #4a89dc;border-radius:3px;"></div><div class="r" style="left:250px;top:421px;width:655px;height:42px;background:#4a89dc;border-radius:3px 3px 0 0;"></div><div class="t" style="left:266px;top:435.15px;font-size:14px;line-height:14px;color:#fff;letter-spacing:-0.05px;">Get this project on your computer</div><div class="t" style="left:266px;top:481.15px;font-size:14px;line-height:14px;color:#333333;letter-spacing:-0.12px;">Use the <span style="color:#4a89dc">CLI tool</span> to add files to your project.</div><div class="t" style="left:288px;top:511.15px;font-size:14px;line-height:14px;color:#333333;">1.</div><div class="t" style="left:306.5px;top:512.27px;font-size:14px;line-height:14px;color:#333333;font-family:'Liberation Mono', monospace;">domino get woobe/quick-start</div><div class="t" style="left:288px;top:530.65px;font-size:14px;line-height:14px;color:#333333;">2.</div><div class="t" style="left:306.5px;top:531.77px;font-size:14px;line-height:14px;color:#333333;font-family:'Liberation Mono', monospace;">cd quick-start</div><div class="t" style="left:307px;top:551.15px;font-size:14px;line-height:14px;color:#333333;font-style:italic;letter-spacing:-0.1px;">&lt;add your project files&gt;</div><div class="t" style="left:288px;top:570.65px;font-size:14px;line-height:14px;color:#333333;">3.</div><div class="t" style="left:306.5px;top:571.77px;font-size:14px;line-height:14px;color:#333333;font-family:'Liberation Mono', monospace;">domino run <i>your_script_name</i></div><div class="r" style="left:250px;top:634px;width:653px;height:249px;border:1px solid #cfd4da;border-radius:3px;"></div><div class="r" style="left:251px;top:635px;width:653px;height:37px;background:#f7f8fa;border-radius:3px 3px 0 0;"></div><div class="r" style="left:251px;top:672px;width:653px;height:1px;background:#cfd4da;"></div><div class="t" style="left:266px;top:646.96px;font-size:16px;line-height:16px;color:#2b2b2b;letter-spacing:-0.15px;">Other Revisions</div><div class="t" style="left:278px;top:703.15px;font-size:14px;line-height:14px;color:#2e2e2e;font-weight:700;letter-spacing:-0.3px;">Time</div><div class="t" style="left:710px;top:703.15px;font-size:14px;line-height:14px;color:#2e2e2e;font-weight:700;letter-spacing:-0.3px;">Message</div><div class="r" style="left:266px;top:732px;width:623px;height:2px;background:#e4e9f0;"></div><div class="t" style="left:278px;top:749.15px;font-size:14px;line-height:14px;color:#333333;letter-spacing:-0.45px;">Sep 17, 2014 @ 03:20 pm</div><div class="r" style="left:266px;top:778px;width:623px;height:1px;background:#e8ecf2;"></div><div class="t" style="left:278px;top:794.15px;font-size:14px;line-height:14px;color:#4a89dc;letter-spacing:-0.3px;">Jul 28, 2014 @ 02:22 pm</div><div class="r" style="left:266px;top:823px;width:623px;height:1px;background:#e8ecf2;"></div><div class="t" style="left:278px;top:839.15px;font-size:14px;line-height:14px;color:#4a89dc;letter-spacing:-0.3px;">Jul 28, 2014 @ 02:22 pm</div><div class="r" style="left:935px;top:43px;width:15px;height:830px;background:#f1f1f1;"></div><svg class="r" style="left:939px;top:48px" width="7" height="5" viewBox="0 0 7 5"><path d="M0 5 L3.5 0.5 L7 5Z" fill="#a3a3a3"/></svg><div class="r" style="left:937px;top:57px;width:11px;height:731px;background:#bdbdbd;box-shadow:inset 0 0 0 1px #a9a9a9;"></div><svg class="r" style="left:939px;top:864px" width="7" height="5" viewBox="0 0 7 5"><path d="M0 0 L3.5 4.5 L7 0Z" fill="#505050"/></svg><div class="r" style="left:880px;top:803px;width:48px;height:48px;border-radius:50%;background:#3d8be8;border:1px solid #2e74d4;box-shadow:0 2px 4px rgba(0,0,0,0.18);"></div><svg class="r" style="left:894px;top:817px" width="22" height="23" viewBox="0 0 22 23"><path d="M3 0 H19 A3 3 0 0 1 22 3 V16 A3 3 0 0 1 19 19 H10 L6.5 22.5 L6.5 19 H3 A3 3 0 0 1 0 16 V3 A3 3 0 0 1 3 0Z" fill="#fff"/><text x="11" y="13.8" text-anchor="middle" font-family="Liberation Sans" font-weight="700" font-size="13" fill="#3d8be8">?</text></svg></div>
</body></html>
